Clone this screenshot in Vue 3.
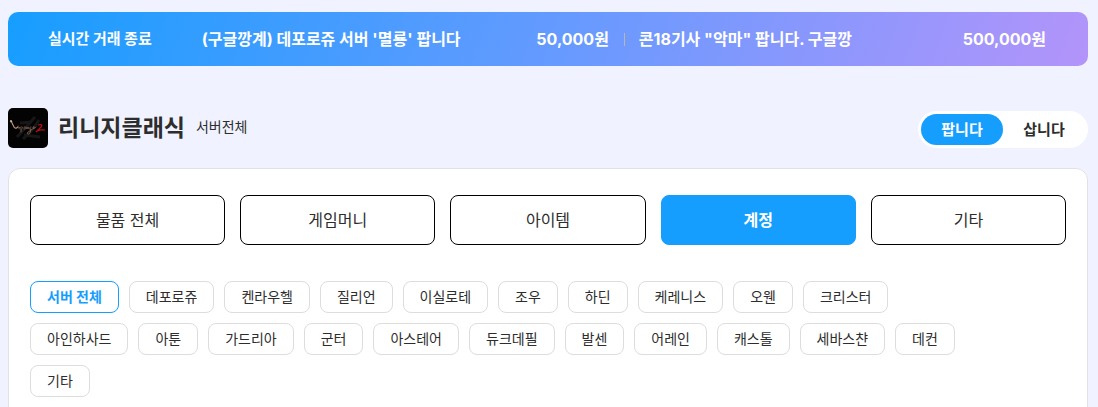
<template>
  <main class="page">
    <section class="ticker">
      <h2 class="ticker-title">실시간 거래 종료</h2>
      <ul class="ticker-list">
        <li v-for="trade in trades" :key="trade.subject">
          <a href="#" class="trade">
            <span class="trade-subject">{{ trade.subject }}</span>
            <span class="trade-price">{{ trade.price }}</span>
          </a>
        </li>
      </ul>
    </section>

    <header class="game">
      <svg class="game-icon" viewBox="0 0 40 40" aria-hidden="true">
        <rect width="40" height="40" fill="#030303" />
        <g fill="none" stroke="#171718" stroke-width="3">
          <path d="M9 29 L20 17 L27 9 M15 31 L25 21 L31 12" />
          <path d="M12 15 L24 14 M16 27 L32 29" />
        </g>
        <g fill="none" stroke="#8d6a52" stroke-width="0.8" stroke-linecap="round" stroke-linejoin="round">
          <path d="M3 14 C2 12 4 13 4 15 L6 19 C7 21 9 20 10 19" stroke="#c79d78" stroke-width="1.1" />
          <path d="M10 18 C9 20 11 21 12 19 L12 21 M13 19 C15 18 15 21 13 21 L13 24 M16 19 C18 18 18 22 16 21 M18 19 L19 21 L20 19 L21 21 M23 19 C21 19 21 21 23 21 L22 25 C21 27 18 26 20 24 L26 20 C27 18 25 18 25 20 C26 21 27 20 28 19" />
        </g>
        <path d="M30 17 C33 16 35 17 33 19 L28 24 C30 21 33 22 37 22" fill="none" stroke="#b01014" stroke-width="1.2" />
        <circle cx="3" cy="13" r="0.8" fill="#ffdcae" />
      </svg>
      <h1 class="game-name">리니지클래식</h1>
      <span class="game-server">서버전체</span>
      <div class="trade-type">
        <button
          v-for="type in tradeTypes"
          :key="type"
          type="button"
          :class="{ active: type === tradeType }"
          @click="tradeType = type"
        >{{ type }}</button>
      </div>
    </header>

    <section class="filter">
      <div class="categories">
        <button
          v-for="name in categories"
          :key="name"
          type="button"
          :class="{ active: name === category }"
          @click="category = name"
        >{{ name }}</button>
      </div>
      <div class="servers">
        <button
          v-for="name in servers"
          :key="name"
          type="button"
          :class="{ active: name === server }"
          @click="server = name"
        >{{ name }}</button>
      </div>
    </section>
  </main>
</template>

<script setup>
import { ref } from 'vue';

const trades = [
  { subject: "(구글깡계) 데포로쥬 서버 '멸룡' 팝니다", price: '50,000원' },
  { subject: '콘18기사 "악마" 팝니다. 구글깡', price: '500,000원' },
];

const tradeTypes = ['팝니다', '삽니다'];
const categories = ['물품 전체', '게임머니', '아이템', '계정', '기타'];
const servers = [
  '서버 전체', '데포로쥬', '켄라우헬', '질리언', '이실로테', '조우', '하딘',
  '케레니스', '오웬', '크리스터', '아인하사드', '아툰', '가드리아', '군터',
  '아스테어', '듀크데필', '발센', '어레인', '캐스톨', '세바스챤', '데컨', '기타',
];

const tradeType = ref('팝니다');
const category = ref('계정');
const server = ref('서버 전체');
</script>

<style>
body {
  background: #f0f3ff;
}
</style>

<style scoped>
.page {
  padding: 12px 10px 0 8px;
  font-family: Inter, "Noto Sans CJK KR", sans-serif;
  color: #2d2d2d;
}

h1,
h2,
ul {
  margin: 0;
  padding: 0;
}

button {
  padding: 0 0 2px;
  font-family: inherit;
  color: inherit;
  cursor: pointer;
}

.ticker {
  display: flex;
  align-items: center;
  gap: 50px;
  height: 54px;
  padding: 0 42px 0 40px;
  border-radius: 10px;
  background: linear-gradient(110deg, #169eff, #649aff 50%, #b394fa);
  color: #fff;
}

.ticker-title {
  flex-shrink: 0;
  font-size: 15px;
  line-height: 24px;
  font-weight: 700;
}

.ticker-list {
  display: grid;
  grid-template-columns: 1fr 1fr;
  gap: 30px;
  flex: 1;
  list-style: none;
}

.ticker-list li {
  position: relative;
  min-width: 0;
}

.ticker-list li + li::before {
  content: "";
  position: absolute;
  top: 6px;
  left: -15px;
  width: 1px;
  height: 13px;
  background: #b9b5b0;
}

.trade {
  display: flex;
  justify-content: space-between;
  gap: 20px;
  font-size: 16px;
  line-height: 24px;
  font-weight: 700;
  color: inherit;
  text-decoration: none;
  white-space: nowrap;
}

.trade-subject {
  overflow: hidden;
}

.game {
  display: flex;
  align-items: center;
  height: 40px;
  margin: 42px 0 20px;
}

.game-icon {
  width: 40px;
  height: 40px;
  border-radius: 5px;
}

.game-name {
  margin-left: 10px;
  font-size: 23px;
  line-height: 36px;
  font-weight: 700;
}

.game-server {
  margin-left: 11px;
  padding-bottom: 2px;
  font-size: 14px;
  line-height: 20px;
}

.trade-type {
  display: flex;
  align-self: flex-end;
  margin-left: auto;
  padding: 3px;
  border-radius: 20px;
  background: #fff;
}

.trade-type button {
  width: 82px;
  height: 31px;
  border: 0;
  border-radius: 16px;
  background: transparent;
  font-size: 15px;
  font-weight: 700;
}

.trade-type button.active {
  background: #169eff;
  color: #fff;
}

.filter {
  padding: 26px 21px 30px;
  border: 1px solid #e2e2e6;
  border-radius: 12px;
  background: #fff;
}

.categories {
  display: grid;
  grid-template-columns: repeat(5, 1fr);
  gap: 15px;
}

.categories button {
  height: 50px;
  border: 1px solid #000;
  border-radius: 8px;
  background: #fff;
  font-size: 16px;
}

.categories button.active {
  border-color: #169eff;
  background: #169eff;
  color: #fff;
  font-weight: 700;
}

.servers {
  display: flex;
  flex-wrap: wrap;
  gap: 10px;
  margin-top: 36px;
  padding-right: 80px;
}

.servers button {
  height: 32px;
  padding: 0 16px 2px;
  border: 1px solid #ddd;
  border-radius: 8px;
  background: #fff;
  font-size: 14px;
}

.servers button.active {
  border-color: #169eff;
  color: #169eff;
  font-weight: 700;
}
</style>
